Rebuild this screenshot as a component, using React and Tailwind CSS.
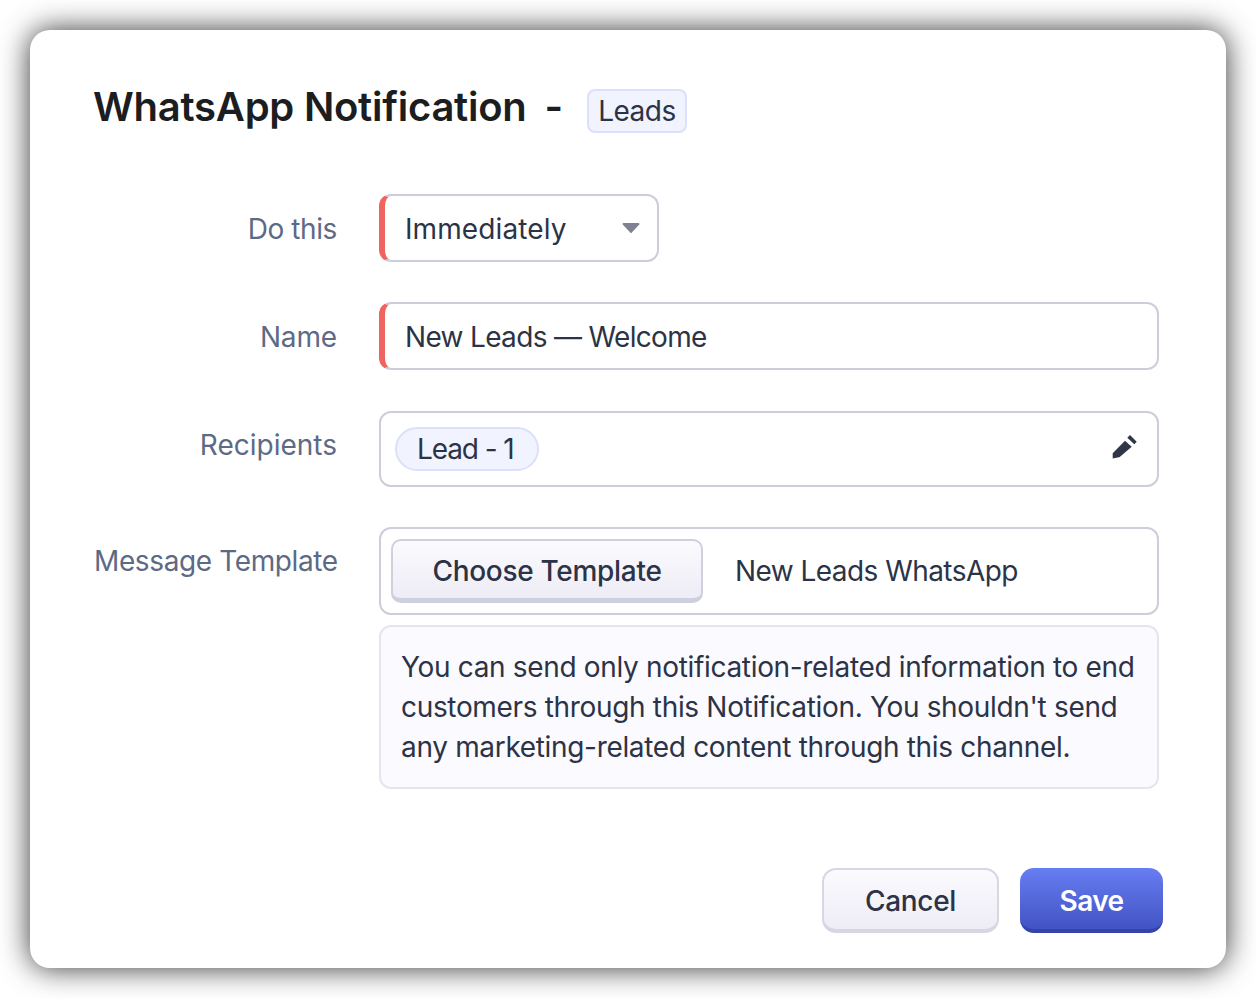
// Form row: right-aligned label next to its control.
function Row({ label, labelClass = "pt-[17px]", className = "", children }) {
  return (
    <div className={`flex ${className}`}>
      <div className={`w-[243px] shrink-0 whitespace-nowrap text-right text-[28px] leading-[34px] text-[#5d6a85] ${labelClass}`}>
        {label}
      </div>
      <div className="ml-[42px] w-[780px]">{children}</div>
    </div>
  );
}

function RequiredBox({ className = "", children }) {
  return (
    <div className={`flex h-[68px] items-center rounded-[12px] border-2 border-[#cdcddb] border-l-[6px] border-l-[#f0645f] pl-[20px] pr-[26px] pt-[2px] text-[28px] text-[#2c3346] ${className}`}>
      {children}
    </div>
  );
}

export default function App() {
  return (
    <div className="h-[998px] bg-white p-[30px] font-['Inter',sans-serif]">
      <div className="h-[938px] rounded-[20px] bg-white pl-[64px] pt-[52px] shadow-[0_0_30px_rgba(0,0,0,0.8)]">
        <div className="flex h-[50px] items-center">
          <h1 className="-ml-[1px] text-[40px] leading-[50px] font-semibold tracking-[-0.25px] text-[#1c1d1f]">WhatsApp Notification</h1>
          <span className="ml-[18px] text-[40px] leading-[50px] font-semibold text-[#1c1d1f]">-</span>
          <span className="ml-[24px] mt-[8px] flex h-[44px] items-center rounded-[8px] border-2 border-[#dbe0fb] bg-[#f1f3fe] px-[9px] text-[28px] tracking-[-0.5px] text-[#2c3346]">
            Leads
          </span>
        </div>

        <Row label="Do this" labelClass="pt-[18px] tracking-[-0.4px]" className="mt-[62px]">
          <RequiredBox className="w-[280px] justify-between">
            <span className="tracking-[0.1px]">Immediately</span>
            <svg width="18" height="12" viewBox="0 0 18 12" className="-mr-[9px] mb-[2px]">
              <path d="M1.5 1h15a1 1 0 0 1 .8 1.6L9.8 10.6a1 1 0 0 1-1.6 0L.7 2.600A1 1 0 0 1 1.5 1z" fill="#7f8290" />
            </svg>
          </RequiredBox>
        </Row>

        <Row label="Name" labelClass="pt-[18px] tracking-[-0.15px]" className="mt-[40px]">
          <RequiredBox>
            <span className="tracking-[-0.67px]">New Leads — Welcome</span>
          </RequiredBox>
        </Row>

        <Row label="Recipients" className="mt-[41px]">
          <div className="flex h-[76px] items-center justify-between rounded-[12px] border-2 border-[#cdcddb] pl-[14px] pr-[19px]">
            <span className="flex h-[44px] items-center rounded-full border-2 border-[#dbe0fb] bg-[#f1f3fe] pl-[20px] pr-[23px] text-[28px] tracking-[-1.1px] text-[#2c3346]">
              Lead - 1
            </span>
            <svg width="26" height="26" viewBox="0 0 26 26" fill="#2f3648" className="mb-[2px]">
              <path d="M.7 23.600v-5.300L13 5.700l6.700 6L8 21.700c-.4.300-.8.500-1.300.600z" />
              <path d="M18 0l6.700 6.700-2.400 2.600-7-6.600z" />
            </svg>
          </div>
        </Row>

        <Row label="Message Template" labelClass="pt-[17px] tracking-[-0.38px]" className="mt-[40px]">
          <div className="flex h-[88px] items-center rounded-[12px] border-2 border-[#cdcddb] pl-[10px] text-[28px] text-[#2c3346]">
            <button className="h-[64px] w-[312px] rounded-[10px] border-2 border-b-[5px] border-[#cfd0de] bg-gradient-to-b from-[#fbfafe] to-[#eeedf6] pt-[3px] text-[28px] font-medium tracking-[-0.3px] text-[#2c3346]">
              Choose Template
            </button>
            <span className="ml-[32px] tracking-[-0.55px]">New Leads WhatsApp</span>
          </div>
          <div className="mt-[10px] h-[164px] rounded-[12px] border-2 border-[#e5e5f0] bg-[#fafaff] px-[20px] pt-[20px] text-[28px] leading-[40px] tracking-[-0.33px] text-[#2c3346]">
            You can send only notification-related information to end customers through this Notification. You shouldn't send any marketing-related content through this channel.
          </div>
        </Row>

        <div className="mt-[79px] flex justify-end gap-[21px] pr-[63px]">
          <button className="h-[65px] w-[177px] rounded-[14px] border-2 border-b-[4px] border-[#d6d7e3] bg-gradient-to-b from-[#fbfafe] to-[#eeedf6] pt-[2px] text-[28px] font-medium tracking-[-0.3px] text-[#2c3346]">
            Cancel
          </button>
          <button className="h-[65px] w-[143px] rounded-[14px] border-b-[4px] border-[#3444a8] bg-gradient-to-b from-[#677df2] to-[#4254c4] pt-[4px] text-[28px] font-semibold tracking-[-0.6px] text-white">
            Save
          </button>
        </div>
      </div>
    </div>
  );
}
